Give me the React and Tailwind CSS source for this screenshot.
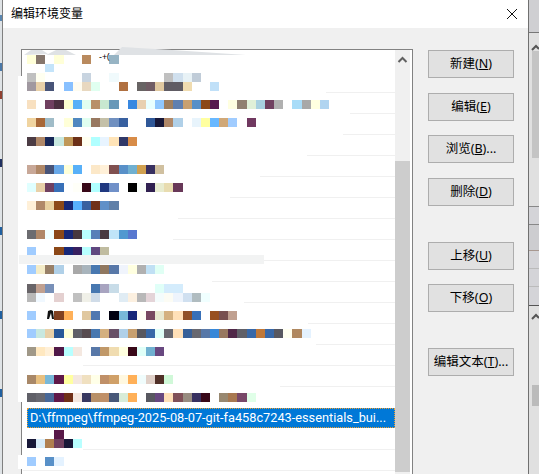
import React from "react";

const CELL = 9.15;

// blurred-out rows: each line is a string of cell colours, "." is an empty cell
const rows = [
  { pad: "pt-[4px]", line: "ml-[246px]", lines: ["ffffd8 85766c . ffffd8 . . b98a5e . . 97b4c4", ". . c4e4fa"] },
  { pad: "pt-[1px]", line: "ml-[304px]", lines: ["c0c0c0 fffff0 . . . . c8d4e0 . . f0fafc . . . . . c0c0c0 d0e0ee e8f2f6 c0ccd8", "a098a0 e8d0a8 485478 . 88c0ff fffcf0 e8d8c0 e0fff0 . . b07040 . 686464 705c64 e0c8a0 605c64 605c64 f0dcb0 . . c0e0f8"] },
  { pad: "pt-[7px]", line: "ml-[328px]", lines: ["f8e0c0 . 704060 4c3040 ffffd0 58b0f8 e0fff0 b89068 c8e8d0 6898b8 . 3888e0 e8d0b0 e8ffff 90c8ff a08060 6080b0 c8a070 5890c8 8c4818 581850 . ffffe0 908070 e0f0d8 a8d0e0 704060 b0b0b0 . a8dcf8 a8a8a8 ffffe0 b0d4f0"] },
  { pad: "pt-[4px]", line: "ml-[321px]", lines: ["f0d4a0 a86838 a0bcc8 . ffffd8 5088c0 e0fff0 987860 c4c0a8 7090c0 3860a0 . . 305898 181838 b08868 b0d0e8 . e8f4fc ffffa0 68b8ff d0a878 a0ccff . 703860"] },
  { pad: "pt-[2px]", line: "ml-[285px]", lines: ["4c3c44 b08868 182858 c8e8e0 c09858 6c3018 fffff0 b0ffff e8f4ff ffe4b8 303868 d88c48"] },
  { pad: "pt-[9px]", line: "ml-[238px]", lines: ["c8a898 b08868 485478 68a8e8 ffffd8 58b0f8 . fce8c8 fff0d8 805050 5890c8 70b0d0 d0a050 383060 d0c0a0"] },
  { pad: "pt-[6px]", line: "ml-[208px]", lines: ["e0ffff e8d0a8 704060 3870b8 . fffff8 380818 b0ffff 203880 7090c8 . 000000 f8fcf8 302050 e8ecd0 e8dcb0 683858"] },
  { pad: "pt-[3px]", line: "ml-[156px]", lines: ["fff0d8 b08868 e8d0a0 8c4818 182878 58b0ff 3860a0 703018 6090c8 6080a8"] },
  { pad: "pt-[11px]", line: "ml-[151px]", lines: ["6c6c70 b08868 f0ffff 8c4818 182878 483840 b8ffff 5880b8 483840 c0e4f8 5098d0 5878d0"] },
  { pad: "pt-[7px]", line: "ml-[228px]", lines: ["a0ccff . . 8c4818 182878 382060 b8ffff 604880 c0bca0"] },
  { pad: "pt-[4px]", line: "ml-[190px]", lines: ["a0ccff f4ecc8 988068 b0d0e8 . a8a8a8 a8b4bc 4878b0 907860 5878a8 f0f4fc ffffe0 b0b0b0 c0e0f4 e0fff4"] },
  { pad: "pt-[2px]", line: "ml-[222px]", lines: ["686468 c0a090 7890b8 . . . . 4878b0 a8a4c0 c8dce8 . . . . e0fff8 d4ecfc d4ecfc", "b8b8b8 f0f8ff . e4d0d0 . c0c0c0 f0f0e8 d0dce8 . . e0ecf4 fcf0e0 b8b8b8 e4d4d8 f4fcfc fcfcf4 eef4fc d0e0f0 b0bcc0 f0ffff"] },
  { pad: "pt-[8px]", line: "ml-[286px]", lines: ["a0ccff . . 804020 ffb058 . e0c8a0 5078b0 . 000010 78b8d8 182878 fffff4 784860 e8e8d0 d4b080 ffe0b8 905028 3870b8 . 985020 785050 c0a090"] },
  { pad: "pt-[5px]", line: "ml-[294px]", lines: ["a0ccff c8e8e0 e8d0a8 285898 ffffd8 606068 584c50 4878b0 d4b080 685068 b0d0e8 c8a070 585860 3868a8 e0fff8 686870 ffe0b8 386098 686870 5878a8 3888d8 987860 502848 606068 3868a8 c07838 3868a8 585860 fffff0 b08860 e4f2ff"] },
  { pad: "pt-[2px]", line: "ml-[61px]", lines: ["a09888 ffe8c0 fff0d8 501848 b8ffff f4e8e0 . 5878a8 c09868 f0dcb0 ffffe0 380818 e0fff8 70b0d0 684880"] },
  { pad: "pt-[9px]", line: "ml-[258px]", lines: ["a88868 e8c080 78b8d8 601848 ffffa0 f4e8e0 f0e0c0 ffffe8 c09068 d0a068 fff8e0 ffb058 f0fcfc e0d0c8 503028 d0f8d8"] },
  { pad: "pt-[6px]", line: "hidden", lines: ["606068 686870 486898 601848 703018 f4e8e0 383860 b89068 c09068 485878 d8ecd8 ffb058 . 585860 684880 ffe0b8 805058 988c80 383060 380818 . 988870 a87850 784868 e0ffe8"] },
  { selected: true },
  { pad: "pt-[1px]", line: "ml-[61px]", lines: [". . . 581848", "181838 d8ecf8 b08050 704060 181838 b8ffff"] },
  { pad: "pt-[7px]", line: "ml-[1px]", lines: ["a0ccff . 5890c8 e4f2ff"] },
];

const Mosaic = ({ cells }) => {
  const list = cells.split(" ");
  return (
    <svg width={list.length * CELL} height="9" shapeRendering="crispEdges" className="block shrink-0">
      {list.map((c, i) =>
        c === "." ? null : <rect key={i} x={i * CELL} y="0" width={CELL} height="9" fill={`#${c}`} />
      )}
    </svg>
  );
};

const Row = ({ row }) => {
  if (row.selected) {
    return (
      <div className="h-[21px] pl-[5px]">
        <div className="h-[20px] bg-[#0078d7] border border-dotted border-[#f0a030] text-white text-[12.75px] leading-[18px] pl-[2px] whitespace-nowrap font-['Roboto',sans-serif]">
          D:\ffmpeg\ffmpeg-2025-08-07-git-fa458c7243-essentials_bui...
        </div>
      </div>
    );
  }
  return (
    <div className="h-[21px] flex flex-col overflow-hidden">
      <div className={`flex-1 pl-[5px] ${row.pad}`}>
        {row.lines.map((l, i) => (
          <Mosaic key={i} cells={l} />
        ))}
      </div>
      <div className={`h-px bg-[#f0f0f0] ${row.line}`} />
    </div>
  );
};

const Btn = ({ className = "", label, hot, tail = "" }) => (
  <div className={`h-[28px] flex items-center justify-center border-[1.5px] border-[#adadad] bg-[#e1e1e1] text-[12.5px] text-black ${className}`}>
    {label}(<span className="underline">{hot}</span>){tail}
  </div>
);

const UpArrow = () => (
  <svg width="15" height="17" viewBox="0 0 15 17" className="block">
    <path d="M3.5 12 L7.5 8 L11.5 12" fill="none" stroke="#606060" strokeWidth="2" />
  </svg>
);

export default function App() {
  return (
    <div className="w-[539px] h-[474px] flex overflow-hidden bg-white font-['Noto_Sans','Noto_Sans_CJK_SC',sans-serif]">
      {/* what shows of the window behind, left side */}
      <div className="w-[3px] shrink-0 bg-[#dfe3e6] border-r border-[#808080] flex flex-col">
        <div className="h-[15px]" />
        <div className="h-[6px] bg-[#5a86b0]" />
        <div className="h-[42px]" />
        <div className="h-[8px] bg-[#4a78a8]" />
        <div className="h-[20px]" />
        <div className="h-[8px] bg-[#904030]" />
        <div className="h-[60px]" />
        <div className="h-[8px] bg-[#203060]" />
        <div className="h-[60px]" />
        <div className="h-[8px] bg-[#2060a0]" />
        <div className="h-[76px]" />
        <div className="h-[8px] bg-[#2060a0]" />
        <div className="h-[70px]" />
        <div className="h-[8px] bg-[#2060a0]" />
      </div>

      <div className="w-[526px] shrink-0 flex flex-col border-r-[1.5px] border-[#707070]">
        <div className="h-[28px] shrink-0 bg-white flex items-center justify-between pl-[8px] pr-[10px]">
          <span className="text-[12px] text-black">编辑环境变量</span>
          <svg width="12" height="12" viewBox="0 0 12 12" className="block">
            <path d="M1 1 L11 11 M11 1 L1 11" stroke="#111" strokeWidth="1" />
          </svg>
        </div>

        <div className="flex-1 bg-[#f0f0f0] pl-[18px] pt-[21px] flex items-start">
          <div className="relative w-[392px] h-[425px] shrink-0 bg-white border-t-[1.5px] border-x-[1.5px] border-[#828282] flex">
            <div className="w-[373px] pt-px shrink-0">
              {rows.map((row, i) => (
                <Row key={i} row={row} />
              ))}
            </div>
            <div className="w-[15px] shrink-0 bg-[#f0f0f0] flex flex-col">
              <UpArrow />
              <div className="h-[94px]" />
              <div className="h-[311px] bg-[#cdcdcd]" />
            </div>

            {/* smudges left over from the blurring */}
            <div className="absolute left-[-4px] top-[26px] w-[6px] h-[326px] bg-white" />
            <div className="absolute left-[-4px] top-[405px] w-[6px] h-[14px] bg-white" />
            <div className="absolute left-[-3px] top-[205px] w-[245px] h-[9px] bg-[#f2f3f3]" />
            <svg width="240" height="10" className="absolute left-0 top-[-3px]">
              <path d="M2 8 L9 3 L20 3 L26 7 Z M24 8 L34 3 L44 3 L54 8 Z M92 8 L100 0 L150 3 L224 8 Z" fill="#dfe2e5" />
            </svg>
            <span className="absolute left-[77px] top-[2px] text-[9px] leading-[10px] text-black">-+(</span>
            <svg width="10" height="10" className="absolute left-[24px] top-[260px]">
              <path d="M2 1 L5 0 L7 1 L8 9 L6 9 L5 3 L3 9 L1 9 Z" fill="#111" />
            </svg>
          </div>

          <div className="ml-[15px] w-[86px] shrink-0 flex flex-col">
            <Btn className="mt-px" label="新建" hot="N" />
            <Btn className="mt-[15px]" label="编辑" hot="E" />
            <Btn className="mt-[14px]" label="浏览" hot="B" tail="..." />
            <Btn className="mt-[15px]" label="删除" hot="D" />
            <Btn className="mt-[36px]" label="上移" hot="U" />
            <Btn className="mt-[14px]" label="下移" hot="O" />
            <Btn className="mt-[36px]" label="编辑文本" hot="T" tail="..." />
          </div>
        </div>
      </div>

      {/* window behind, right side */}
      <div className="flex-1 flex flex-col bg-[#e0e0e0]">
        <div className="h-[33px] bg-[#cfcfd2] border-b border-[#777]" />
        <div className="h-[11px]" />
        <div className="h-[7px] flex justify-end">
          <svg width="8" height="7" viewBox="0 0 8 7"><path d="M1 6 L5 2 L8 5" fill="none" stroke="#555" strokeWidth="2" /></svg>
        </div>
        <div className="h-[107px] ml-[3px] bg-[#c4c4c4]" />
        <div className="h-[39px]" />
        <div className="h-[10px] border-b border-[#888]" />
        <div className="h-[18px] bg-[#d4d4d8] border-b border-[#888]" />
        <div className="h-[26px] bg-[#cdcdd0] border-b border-[#a89890]" />
        <div className="h-[18px] bg-[#d4d4d8] border-b border-[#bbb]" />
        <div className="h-[18px] bg-[#d4d4d8] border-b border-[#bbb]" />
        <div className="h-[19px] bg-[#d4d4d8] border-b border-[#555]" />
        <div className="h-[7px]" />
        <div className="h-[7px] flex justify-end">
          <svg width="8" height="7" viewBox="0 0 8 7"><path d="M1 6 L5 2 L8 5" fill="none" stroke="#555" strokeWidth="2" /></svg>
        </div>
        <div className="h-[65px]" />
        <div className="h-[21px] ml-[3px] bg-[#bbbbbb]" />
      </div>
    </div>
  );
}
